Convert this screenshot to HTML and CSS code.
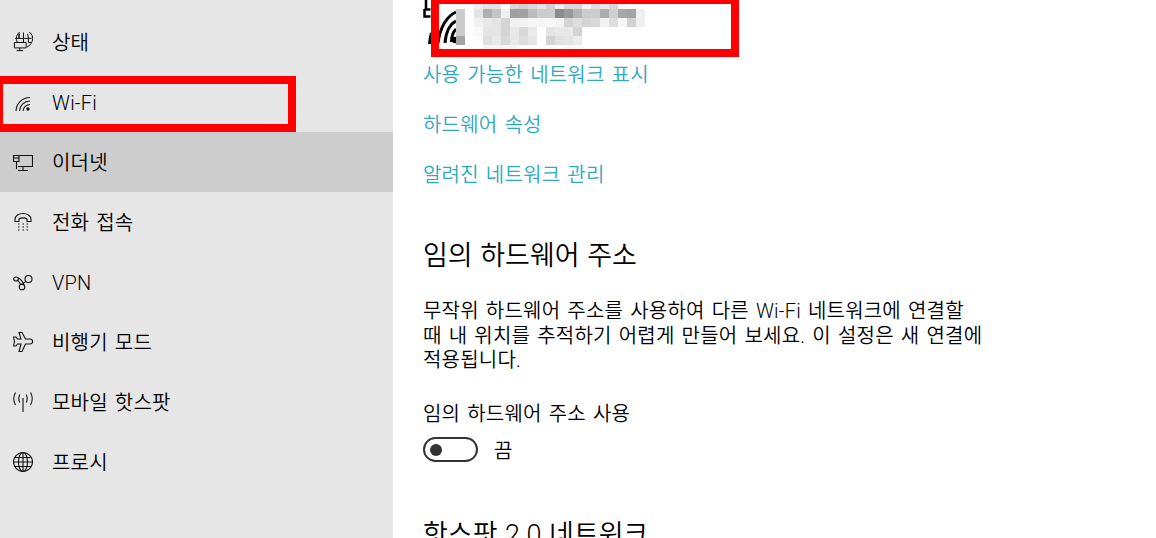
FILE: index.html
```html
<!DOCTYPE html>
<html lang="ko">
<head>
<meta charset="utf-8">
<title>Wi-Fi 설정</title>
<link rel="stylesheet" href="styles.css">
</head>
<body>
<div class="app">
  <nav class="side">
    <a class="item"><svg class="ico" viewBox="0 0 20 22"><path d="M3.500 11A9 9 0 1 1 18.500 13 9 9 0 0 1 14.500 16.500M1.500 7h18M5.500 7V2M10.500 .5V11.500M15 2q1.200 3 1 9.500h3M6.500 1.500q-1 2.500-1 5.500M.5 11.500h13v6H.5zM6.500 17.500V20.500M3 20.500h7"/></svg><span>상태</span></a>
    <a class="item"><svg class="ico" viewBox="0 0 20 20"><path d="M3 19A14 14 0 0 1 17 5.500M6.500 19A10.500 10.500 0 0 1 17 9M10 19A7 7 0 0 1 17 12.500"/><circle class="fill" cx="15" cy="17" r="1.700"/></svg><span>Wi-Fi</span></a>
    <a class="item active"><svg class="ico" viewBox="0 0 20 20"><path d="M5 3.500h14.500v11H5M10 14.500v3.500M5 18.500h10M.5 3.500h5.500v6H.5zM.5 6h5.500M3.500 9.500v7.500"/></svg><span>이더넷</span></a>
    <a class="item"><svg class="ico" viewBox="0 0 20 20"><path d="M2 7.500C2-.5 18-.5 18 7.500v2h-4V7c-2-1.500-6-1.500-8 0v2.500H2zM5 12h1.500M9.500 12h1.500M13.500 12h1.500M5 15h1.500M9.500 15h1.500M13.500 15h1.500M5 18h1.500M9.500 18h1.500M13.500 18h1.500"/></svg><span>전화 접속</span></a>
    <a class="item"><svg class="ico" viewBox="0 0 20 20"><ellipse cx="3" cy="7" rx="2.300" ry="2"/><circle cx="15.500" cy="7" r="3.500"/><circle cx="9" cy="15" r="2.800"/><path d="M5 6c3 1 5 4 6 7.500M13 9.500c-2 1-3.500 2.500-5 3M5 8.500c1 1.500 2 2.500 2.500 4"/></svg><span>VPN</span></a>
    <a class="item"><svg class="ico" viewBox="0 0 20 20"><path d="M6 .5h3l3.500 6.500h4.500c3.500 0 3.500 5 0 5h-4.500L9 19.500H6L8 12H4.500l-1.500 2H.5l1-4.500-1-4.500H3l1.500 2H8z"/></svg><span>비행기 모드</span></a>
    <a class="item"><svg class="ico" viewBox="0 0 20 20"><path d="M10 6v14M6.800 2.500q-2 4 0 8M13.200 2.500q2 4 0 8M2.500 .5q-3.500 6 0 12.500M17.500 .5q3.500 6 0 12.500"/></svg><span>모바일 핫스팟</span></a>
    <a class="item"><svg class="ico" viewBox="0 0 20 20"><circle cx="10" cy="10" r="9.500"/><ellipse cx="10" cy="10" rx="4.500" ry="9.500"/><path d="M10 .5v19M.5 10h19M2 5.500h16M2 14.500h16"/></svg><span>프로시</span></a>
  </nav>
  <main class="main">
    <div class="net">
      <svg class="net-icon" width="36" height="50" viewBox="424 0 36 50">
        <path class="lock" d="M427 9V0M425.500 9.500h6M425.500 9v7.500h6"/>
        <path class="arc" d="M430.500 44Q431 38 432.500 33M439 43C441 27 448 16 457 12M446 43C447 32 451 24 457 21M452.500 42C452.500 36 454 32 457 29"/>
        <circle cx="456" cy="40" r="3.200"/>
      </svg>
      <svg class="net-blur" width="189" height="50" viewBox="0 0 189 50" shape-rendering="crispEdges">
        <rect x="0" y="9" width="9" height="27" fill="#ccc"/><rect x="0" y="36" width="9" height="9" fill="#a4a4a4"/>
        <rect x="18" y="0" width="9" height="9" fill="#eee"/><rect x="27" y="0" width="18" height="9" fill="#e4e4e4"/><rect x="54" y="0" width="9" height="9" fill="#d8d8d8"/><rect x="63" y="0" width="9" height="9" fill="#d0d0d0"/><rect x="72" y="0" width="9" height="9" fill="#d8d8d8"/><rect x="81" y="0" width="9" height="9" fill="#e4e4e4"/><rect x="90" y="0" width="9" height="9" fill="#d2d2d2"/><rect x="99" y="0" width="9" height="9" fill="#f0f0f0"/><rect x="108" y="0" width="18" height="9" fill="#d9d9d9"/><rect x="126" y="0" width="9" height="9" fill="#f4f4f4"/><rect x="135" y="0" width="9" height="9" fill="#dedede"/><rect x="144" y="0" width="9" height="9" fill="#e8e8e8"/><rect x="153" y="0" width="9" height="9" fill="#d8d8d8"/><rect x="162" y="0" width="9" height="9" fill="#fafafa"/>
        <rect x="18" y="9" width="9" height="9" fill="#e4e4e4"/><rect x="27" y="9" width="9" height="9" fill="#b0b0b0"/><rect x="36" y="9" width="9" height="9" fill="#c4c4c4"/><rect x="45" y="9" width="9" height="9" fill="#f0f0f0"/><rect x="54" y="9" width="9" height="9" fill="#9e9e9e"/><rect x="63" y="9" width="9" height="9" fill="#a2a2a2"/><rect x="72" y="9" width="9" height="9" fill="#bcbcbc"/><rect x="81" y="9" width="18" height="9" fill="#ccc"/><rect x="99" y="9" width="9" height="9" fill="#8c8c8c"/><rect x="108" y="9" width="9" height="9" fill="#9a9a9a"/><rect x="117" y="9" width="9" height="9" fill="#b4b4b4"/><rect x="126" y="9" width="18" height="9" fill="#ccc"/><rect x="144" y="9" width="9" height="9" fill="#acacac"/><rect x="153" y="9" width="9" height="9" fill="#d0d0d0"/><rect x="162" y="9" width="9" height="9" fill="#a8a8a8"/><rect x="171" y="9" width="9" height="9" fill="#a4a4a4"/><rect x="180" y="9" width="9" height="9" fill="#f0f0f0"/>
        <rect x="18" y="18" width="9" height="9" fill="#f0f0f0"/><rect x="27" y="18" width="9" height="9" fill="#e8e8e8"/><rect x="36" y="18" width="9" height="9" fill="#e4e4e4"/><rect x="45" y="18" width="9" height="9" fill="#d4d4d4"/><rect x="54" y="18" width="18" height="9" fill="#f1f1f1"/><rect x="72" y="18" width="27" height="9" fill="#f6f6f6"/><rect x="99" y="18" width="9" height="9" fill="#f4f4f4"/><rect x="108" y="18" width="9" height="9" fill="#d4d4d4"/><rect x="117" y="18" width="9" height="9" fill="#dedede"/><rect x="126" y="18" width="9" height="9" fill="#d4d4d4"/><rect x="135" y="18" width="9" height="9" fill="#d8d8d8"/><rect x="144" y="18" width="9" height="9" fill="#f2f2f2"/><rect x="153" y="18" width="9" height="9" fill="#dedede"/><rect x="162" y="18" width="9" height="9" fill="#f6f6f6"/><rect x="171" y="18" width="9" height="9" fill="#d2d2d2"/><rect x="180" y="18" width="9" height="9" fill="#f0f0f0"/>
        <rect x="18" y="27" width="9" height="9" fill="#f8f8f8"/><rect x="27" y="27" width="18" height="9" fill="#e4e4e4"/><rect x="45" y="27" width="9" height="9" fill="#d4d4d4"/><rect x="54" y="27" width="9" height="9" fill="#e8e8e8"/><rect x="63" y="27" width="9" height="9" fill="#d8d8d8"/><rect x="72" y="27" width="9" height="9" fill="#eaeaea"/><rect x="90" y="27" width="9" height="9" fill="#e4e4e4"/><rect x="99" y="27" width="18" height="9" fill="#e8e8e8"/><rect x="117" y="27" width="9" height="9" fill="#d4d4d4"/>
        <rect x="18" y="36" width="9" height="9" fill="#fcfcfc"/><rect x="27" y="36" width="9" height="9" fill="#e0e0e0"/><rect x="36" y="36" width="9" height="9" fill="#e8e8e8"/><rect x="45" y="36" width="9" height="9" fill="#d8d8d8"/><rect x="54" y="36" width="9" height="9" fill="#e8e8e8"/><rect x="63" y="36" width="9" height="9" fill="#dcdcdc"/><rect x="72" y="36" width="9" height="9" fill="#e4e4e4"/><rect x="90" y="36" width="9" height="9" fill="#d4d4d4"/><rect x="99" y="36" width="9" height="9" fill="#e0e0e0"/><rect x="108" y="36" width="9" height="9" fill="#e4e4e4"/><rect x="117" y="36" width="9" height="9" fill="#ebebeb"/>
        <rect x="27" y="45" width="36" height="5" fill="#f4f4f4"/><rect x="108" y="45" width="18" height="5" fill="#f8f8f8"/>
      </svg>
    </div>
    <a class="link">사용 가능한 네트워크 표시</a>
    <a class="link">하드웨어 속성</a>
    <a class="link">알려진 네트워크 관리</a>
    <h2 class="head">임의 하드웨어 주소</h2>
    <p class="desc">무작위 하드웨어 주소를 사용하여 다른 Wi-Fi 네트워크에 연결할<br>때 내 위치를 추적하기 어렵게 만들어 보세요. 이 설정은 새 연결에<br>적용됩니다.</p>
    <div class="label">임의 하드웨어 주소 사용</div>
    <div class="toggle-row"><span class="toggle"><span class="knob"></span></span><span>끔</span></div>
    <h2 class="head head2">핫스팟 2.0 네트워크</h2>
  </main>
</div>
<div class="mark mark-a"></div>
<div class="mark mark-b"></div>
</body>
</html>
```
FILE: styles.css
```css
html, body { margin: 0; padding: 0; height: 100%; overflow: hidden; background: #fff; }
body { font-family: Roboto, "Noto Sans CJK KR", sans-serif; color: #000; position: relative; font-size: 20px; word-spacing: 2px; letter-spacing: .2px; font-weight: 350; }
.app { display: flex; height: 538px; overflow: hidden; }
.side { width: 393px; flex: none; background: #e6e6e6; padding-top: 12px; box-sizing: border-box; }
.item { display: flex; align-items: center; height: 60px; padding-left: 13px; gap: 19px; line-height: 40px; }
.item span { padding-top: 2px; }
.item.active { background: #cdcdcd; }
.ico { width: 20px; height: 20px; fill: none; stroke: #111; stroke-width: 1.100; flex: none; }
.fill { fill: #111; stroke: none; }
.main { padding-left: 30px; flex: 1; }
.net { height: 49px; display: flex; margin-bottom: 1px; }
.net-icon { flex: none; fill: #000; }
.net-icon .lock, .net-icon .arc { fill: none; stroke: #000; stroke-width: 2.500; }
.net-icon .arc { stroke-width: 3; }
.net-blur { flex: none; margin-left: -3px; }
.link { display: block; height: 50px; line-height: 50px; color: #2fa9bf; }
.head { margin: 38px 0 0; font-size: 27px; font-weight: 350; line-height: 36px; word-spacing: 1px; letter-spacing: 0; }
.desc { margin: 25px 0 0; line-height: 24.500px; }
.label { margin-top: 28px; line-height: 26px; }
.toggle-row { display: flex; align-items: center; gap: 16px; margin-top: 10px; height: 26px; }
.toggle { width: 55px; height: 25px; box-sizing: border-box; border: 2px solid #333; border-radius: 13px; display: flex; align-items: center; padding-left: 5px; }
.knob { width: 12px; height: 12px; border-radius: 50%; background: #333; }
.head2 { margin-top: 54px; }
.mark { position: absolute; border: 8px solid #f00; box-sizing: border-box; }
.mark-a { left: -5px; top: 76px; width: 301px; height: 56px; }
.mark-b { left: 431px; top: -4px; width: 308px; height: 61px; }
```
